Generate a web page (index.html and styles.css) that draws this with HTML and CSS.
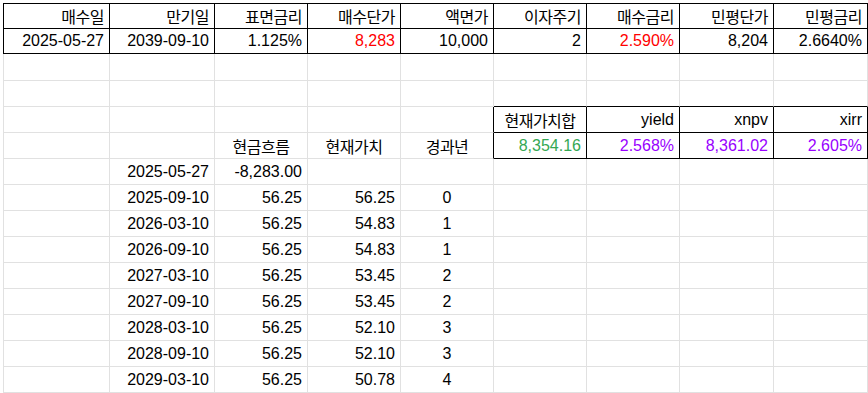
FILE: index.html
```html
<!DOCTYPE html>
<html lang="ko">
<head>
<meta charset="utf-8">
<title>Bond sheet</title>
<link rel="stylesheet" href="styles.css">
</head>
<body>
<div class="sheet">
  <!-- row 0 -->
  <div class="c r k bt bl bk">매수일</div>
  <div class="c r k bt bk">만기일</div>
  <div class="c r k bt bk">표면금리</div>
  <div class="c r k bt bk">매수단가</div>
  <div class="c r k bt bk">액면가</div>
  <div class="c r k bt bk">이자주기</div>
  <div class="c r k bt bk">매수금리</div>
  <div class="c r k bt bk">민평단가</div>
  <div class="c r k bt bk">민평금리</div>
  <!-- row 1 -->
  <div class="c r bl bk">2025-05-27</div>
  <div class="c r bk">2039-09-10</div>
  <div class="c r bk">1.125%</div>
  <div class="c r bk red">8,283</div>
  <div class="c r bk">10,000</div>
  <div class="c r bk">2</div>
  <div class="c r bk red">2.590%</div>
  <div class="c r bk">8,204</div>
  <div class="c r bk">2.6640%</div>
  <!-- row 2 -->
  <div class="c"></div><div class="c"></div><div class="c"></div><div class="c"></div><div class="c"></div><div class="c"></div><div class="c"></div><div class="c"></div><div class="c"></div>
  <!-- row 3 -->
  <div class="c"></div><div class="c"></div><div class="c"></div><div class="c"></div><div class="c"></div>
  <div class="c bb"></div><div class="c bb"></div><div class="c bb"></div><div class="c bb"></div>
  <!-- row 4 -->
  <div class="c"></div><div class="c"></div><div class="c"></div><div class="c"></div><div class="c br"></div>
  <div class="c ce k bk">현재가치합</div>
  <div class="c r bk">yield</div>
  <div class="c r bk">xnpv</div>
  <div class="c r bk">xirr</div>
  <!-- row 5 -->
  <div class="c"></div><div class="c"></div>
  <div class="c ce k">현금흐름</div>
  <div class="c ce k">현재가치</div>
  <div class="c ce k br">경과년</div>
  <div class="c r bk grn">8,354.16</div>
  <div class="c r bk pur">2.568%</div>
  <div class="c r bk pur">8,361.02</div>
  <div class="c r bk pur">2.605%</div>
  <!-- row 6 -->
  <div class="c"></div><div class="c r">2025-05-27</div><div class="c r">-8,283.00</div><div class="c"></div><div class="c"></div><div class="c"></div><div class="c"></div><div class="c"></div><div class="c"></div>
  <!-- row 7 -->
  <div class="c"></div><div class="c r">2025-09-10</div><div class="c r">56.25</div><div class="c r">56.25</div><div class="c ce">0</div><div class="c"></div><div class="c"></div><div class="c"></div><div class="c"></div>
  <!-- row 8 -->
  <div class="c"></div><div class="c r">2026-03-10</div><div class="c r">56.25</div><div class="c r">54.83</div><div class="c ce">1</div><div class="c"></div><div class="c"></div><div class="c"></div><div class="c"></div>
  <!-- row 9 -->
  <div class="c"></div><div class="c r">2026-09-10</div><div class="c r">56.25</div><div class="c r">54.83</div><div class="c ce">1</div><div class="c"></div><div class="c"></div><div class="c"></div><div class="c"></div>
  <!-- row 10 -->
  <div class="c"></div><div class="c r">2027-03-10</div><div class="c r">56.25</div><div class="c r">53.45</div><div class="c ce">2</div><div class="c"></div><div class="c"></div><div class="c"></div><div class="c"></div>
  <!-- row 11 -->
  <div class="c"></div><div class="c r">2027-09-10</div><div class="c r">56.25</div><div class="c r">53.45</div><div class="c ce">2</div><div class="c"></div><div class="c"></div><div class="c"></div><div class="c"></div>
  <!-- row 12 -->
  <div class="c"></div><div class="c r">2028-03-10</div><div class="c r">56.25</div><div class="c r">52.10</div><div class="c ce">3</div><div class="c"></div><div class="c"></div><div class="c"></div><div class="c"></div>
  <!-- row 13 -->
  <div class="c"></div><div class="c r">2028-09-10</div><div class="c r">56.25</div><div class="c r">52.10</div><div class="c ce">3</div><div class="c"></div><div class="c"></div><div class="c"></div><div class="c"></div>
  <!-- row 14 -->
  <div class="c"></div><div class="c r">2029-03-10</div><div class="c r">56.25</div><div class="c r">50.78</div><div class="c ce">4</div><div class="c"></div><div class="c"></div><div class="c"></div><div class="c"></div>
</div>
</body>
</html>
```

FILE: styles.css
```css
html, body {
  margin: 0;
  padding: 0;
  background: #ffffff;
}

body {
  font-family: "Liberation Sans", Arial, "Noto Sans CJK KR", sans-serif;
  font-size: 16px;
  color: #000000;
}

.sheet {
  margin: 3px 0 0 3px;
  display: grid;
  grid-template-columns: 106px 105px 93px 93px 93px 93px 93px 94px 94px;
  grid-template-rows: 26px 25px 27px repeat(12, 26px);
  border-left: 1px solid #e1e1e1;
  width: max-content;
}

.c {
  box-sizing: border-box;
  border-right: 1px solid #e1e1e1;
  border-bottom: 1px solid #e1e1e1;
  padding: 0 5px;
  display: flex;
  align-items: center;
  white-space: nowrap;
  overflow: hidden;
}

.r { justify-content: flex-end; }
.ce { justify-content: center; }

.k {
  font-family: "Noto Sans CJK KR", "Liberation Sans", sans-serif;
  font-size: 16px;
  letter-spacing: -0.5px;
}

.bk {
  border-right-color: #000000;
  border-bottom-color: #000000;
}
.bt { border-top: 1px solid #000000; }
.bl { border-left: 1px solid #000000; margin-left: -1px; }
.bb { border-bottom-color: #000000; }
.br { border-right-color: #000000; }

.red { color: #ff0000; }
.pur { color: #9900ff; }
.grn { color: #34a853; }
```
